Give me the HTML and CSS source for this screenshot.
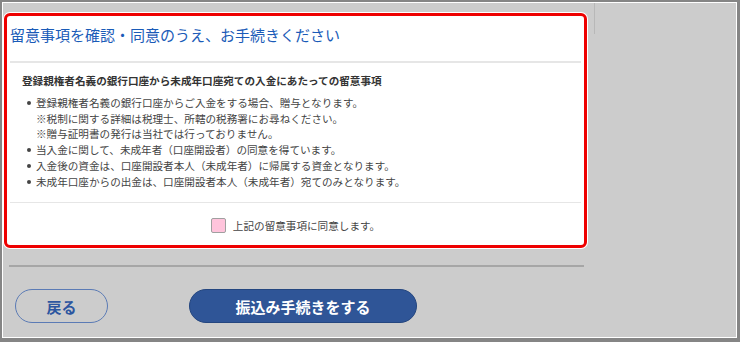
FILE: index.html
```html
<!DOCTYPE html>
<html lang="ja">
<head>
    <meta charset="UTF-8">
    <meta name="viewport" content="width=device-width, initial-scale=1.0">
    <title>留意事項の確認</title>
    <link rel="stylesheet" href="styles.css">
</head>
<body>
    <div class="frame">
        <div class="main">
            <div class="notice">
                <h1 class="notice-title">留意事項を確認・同意のうえ、お手続きください</h1>
                <div class="notice-body">
                    <p class="notice-head">登録親権者名義の銀行口座から未成年口座宛ての入金にあたっての留意事項</p>
                    <ul class="notice-list">
                        <li>登録親権者名義の銀行口座からご入金をする場合、贈与となります。<br>※税制に関する詳細は税理士、所轄の税務署にお尋ねください。<br>※贈与証明書の発行は当社では行っておりません。</li>
                        <li>当入金に関して、未成年者（口座開設者）の同意を得ています。</li>
                        <li>入金後の資金は、口座開設者本人（未成年者）に帰属する資金となります。</li>
                        <li>未成年口座からの出金は、口座開設者本人（未成年者）宛てのみとなります。</li>
                    </ul>
                </div>
                <label class="agree">
                    <span class="agree-box"></span>
                    <span>上記の留意事項に同意します。</span>
                </label>
            </div>

            <hr class="rule">

            <div class="actions">
                <button class="btn btn-back">戻る</button>
                <button class="btn btn-submit">振込み手続きをする</button>
            </div>
        </div>
        <div class="side"></div>
    </div>
</body>
</html>
```

FILE: styles.css
```css
* {
    margin: 0;
    padding: 0;
    box-sizing: border-box;
}

body {
    font-family: "Noto Sans CJK JP", "Noto Sans", sans-serif;
    background: #cccccc;
}

.frame {
    display: flex;
    width: 740px;
    height: 342px;
    background: #cccccc;
    border-style: solid;
    border-color: #858585;
    border-width: 2px 3px 4px 2px;
    box-shadow: inset 0 0 0 1px #ffffff;
}

.main {
    width: 592px;
    padding-top: 11px;
}

.side {
    align-self: flex-start;
    margin-top: 1px;
    height: 31px;
    border-left: 1px solid #b8b8b8;
}

/* notice box */
.notice {
    width: 583px;
    margin-left: 2px;
    background: #ffffff;
    border: 3px solid #ee0000;
    border-radius: 6px;
    box-shadow: 0 0 0 1px #ffffff;
}

.notice-title {
    margin: 0 3px;
    padding: 8px 0 15px;
    font-size: 15px;
    line-height: 22px;
    font-weight: 400;
    color: #1a5bb8;
    border-bottom: 2px solid #e6e6e6;
}

.notice-body {
    margin: 0 3px;
    padding: 10px 0 13px 12px;
    border-bottom: 1px solid #e6e6e6;
    font-size: 10.6px;
    color: #444444;
}

.notice-head {
    font-weight: 700;
    color: #333333;
    line-height: 16px;
    margin-bottom: 6px;
}

.notice-list {
    list-style: none;
}

.notice-list li {
    position: relative;
    padding-left: 14px;
    line-height: 15.7px;
}

.notice-list li::before {
    content: "";
    position: absolute;
    left: 5px;
    top: 6px;
    width: 4px;
    height: 4px;
    border-radius: 50%;
    background: #444444;
}

.agree {
    display: flex;
    justify-content: center;
    align-items: center;
    gap: 7px;
    padding: 15px 0 12px;
    font-size: 10.6px;
    color: #444444;
}

.agree-box {
    width: 15px;
    height: 15px;
    background: #ffc4dc;
    border: 1px solid #a0a0a0;
    border-radius: 2px;
}

.rule {
    width: 575px;
    margin: 17px 0 0 7px;
    border: none;
    border-top: 2px solid #a6a6a6;
}

/* buttons */
.actions {
    display: flex;
    gap: 81px;
    margin: 22px 0 0 13px;
}

.btn {
    height: 34px;
    border-radius: 17px;
    font-family: inherit;
    font-size: 15px;
    font-weight: 700;
}

.btn-back {
    width: 93px;
    background: transparent;
    border: 1px solid #5b7bb5;
    color: #2c56a0;
}

.btn-submit {
    width: 228px;
    background: #2f5597;
    border: 1px solid #24467f;
    color: #ffffff;
}
```
